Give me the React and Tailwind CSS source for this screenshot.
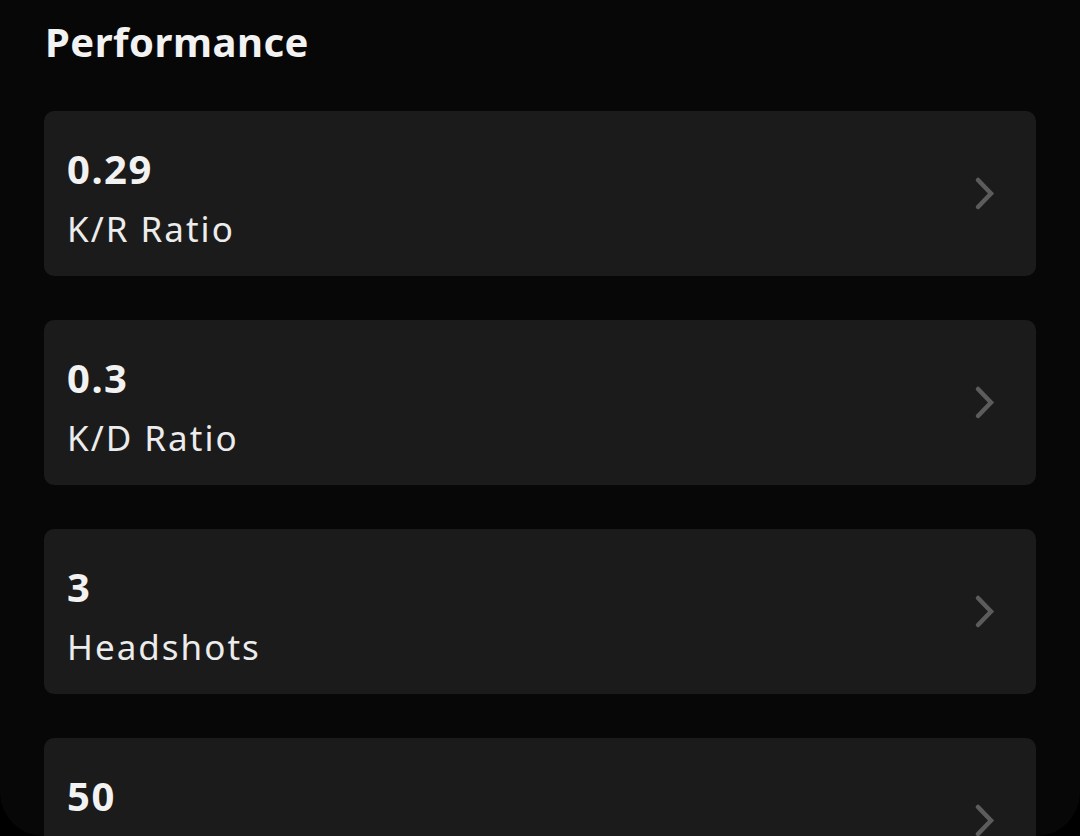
import React from 'react';

const stats = [
    {value: '0.29', label: 'K/R Ratio'},
    {value: '0.3', label: 'K/D Ratio'},
    {value: '3', label: 'Headshots'},
    {value: '50', label: 'Headshots %'},
];

// Chevron drawn to match the thin grey arrow on each card
const Chevron = () => (
    <svg width="28" height="36" viewBox="0 0 28 36" className="shrink-0">
        <polyline points="6,4 19,17.5 6,31" fill="none" stroke="#5c5c5c" strokeWidth="4.5" strokeLinecap="round" strokeLinejoin="miter"/>
    </svg>
);

const StatCard = ({value, label}) => (
    <div className="flex items-start justify-between h-[165px] shrink-0 rounded-[10px] bg-[#1b1b1b] pl-[23px] pr-[36px]">
        <div className="pt-[34px]">
            <div className="text-[40px] leading-[48px] font-bold text-[#f2f2f2] tracking-[1.5px]">{value}</div>
            <div className="mt-[14px] text-[35px] leading-[44px] text-[#ececec] tracking-[2px]">{label}</div>
        </div>
        <div className="self-center">
            <Chevron/>
        </div>
    </div>
);

const App = () => {
    return (
        <div className="h-screen w-full bg-black overflow-hidden" style={{fontFamily: '"Noto Sans", "Open Sans", sans-serif'}}>
            <div className="h-[836px] w-full bg-[#070707] rounded-b-[44px] overflow-hidden px-[44px] pt-[18px]">
                <h1 className="pl-px text-[40px] leading-[48px] font-bold text-[#f2f2f2] tracking-[0.5px]">Performance</h1>
                <div className="mt-[45px] flex flex-col gap-[44px]">
                    {stats.map((s) => (
                        <StatCard key={s.label} value={s.value} label={s.label}/>
                    ))}
                </div>
            </div>
        </div>
    );
};

export default App;
